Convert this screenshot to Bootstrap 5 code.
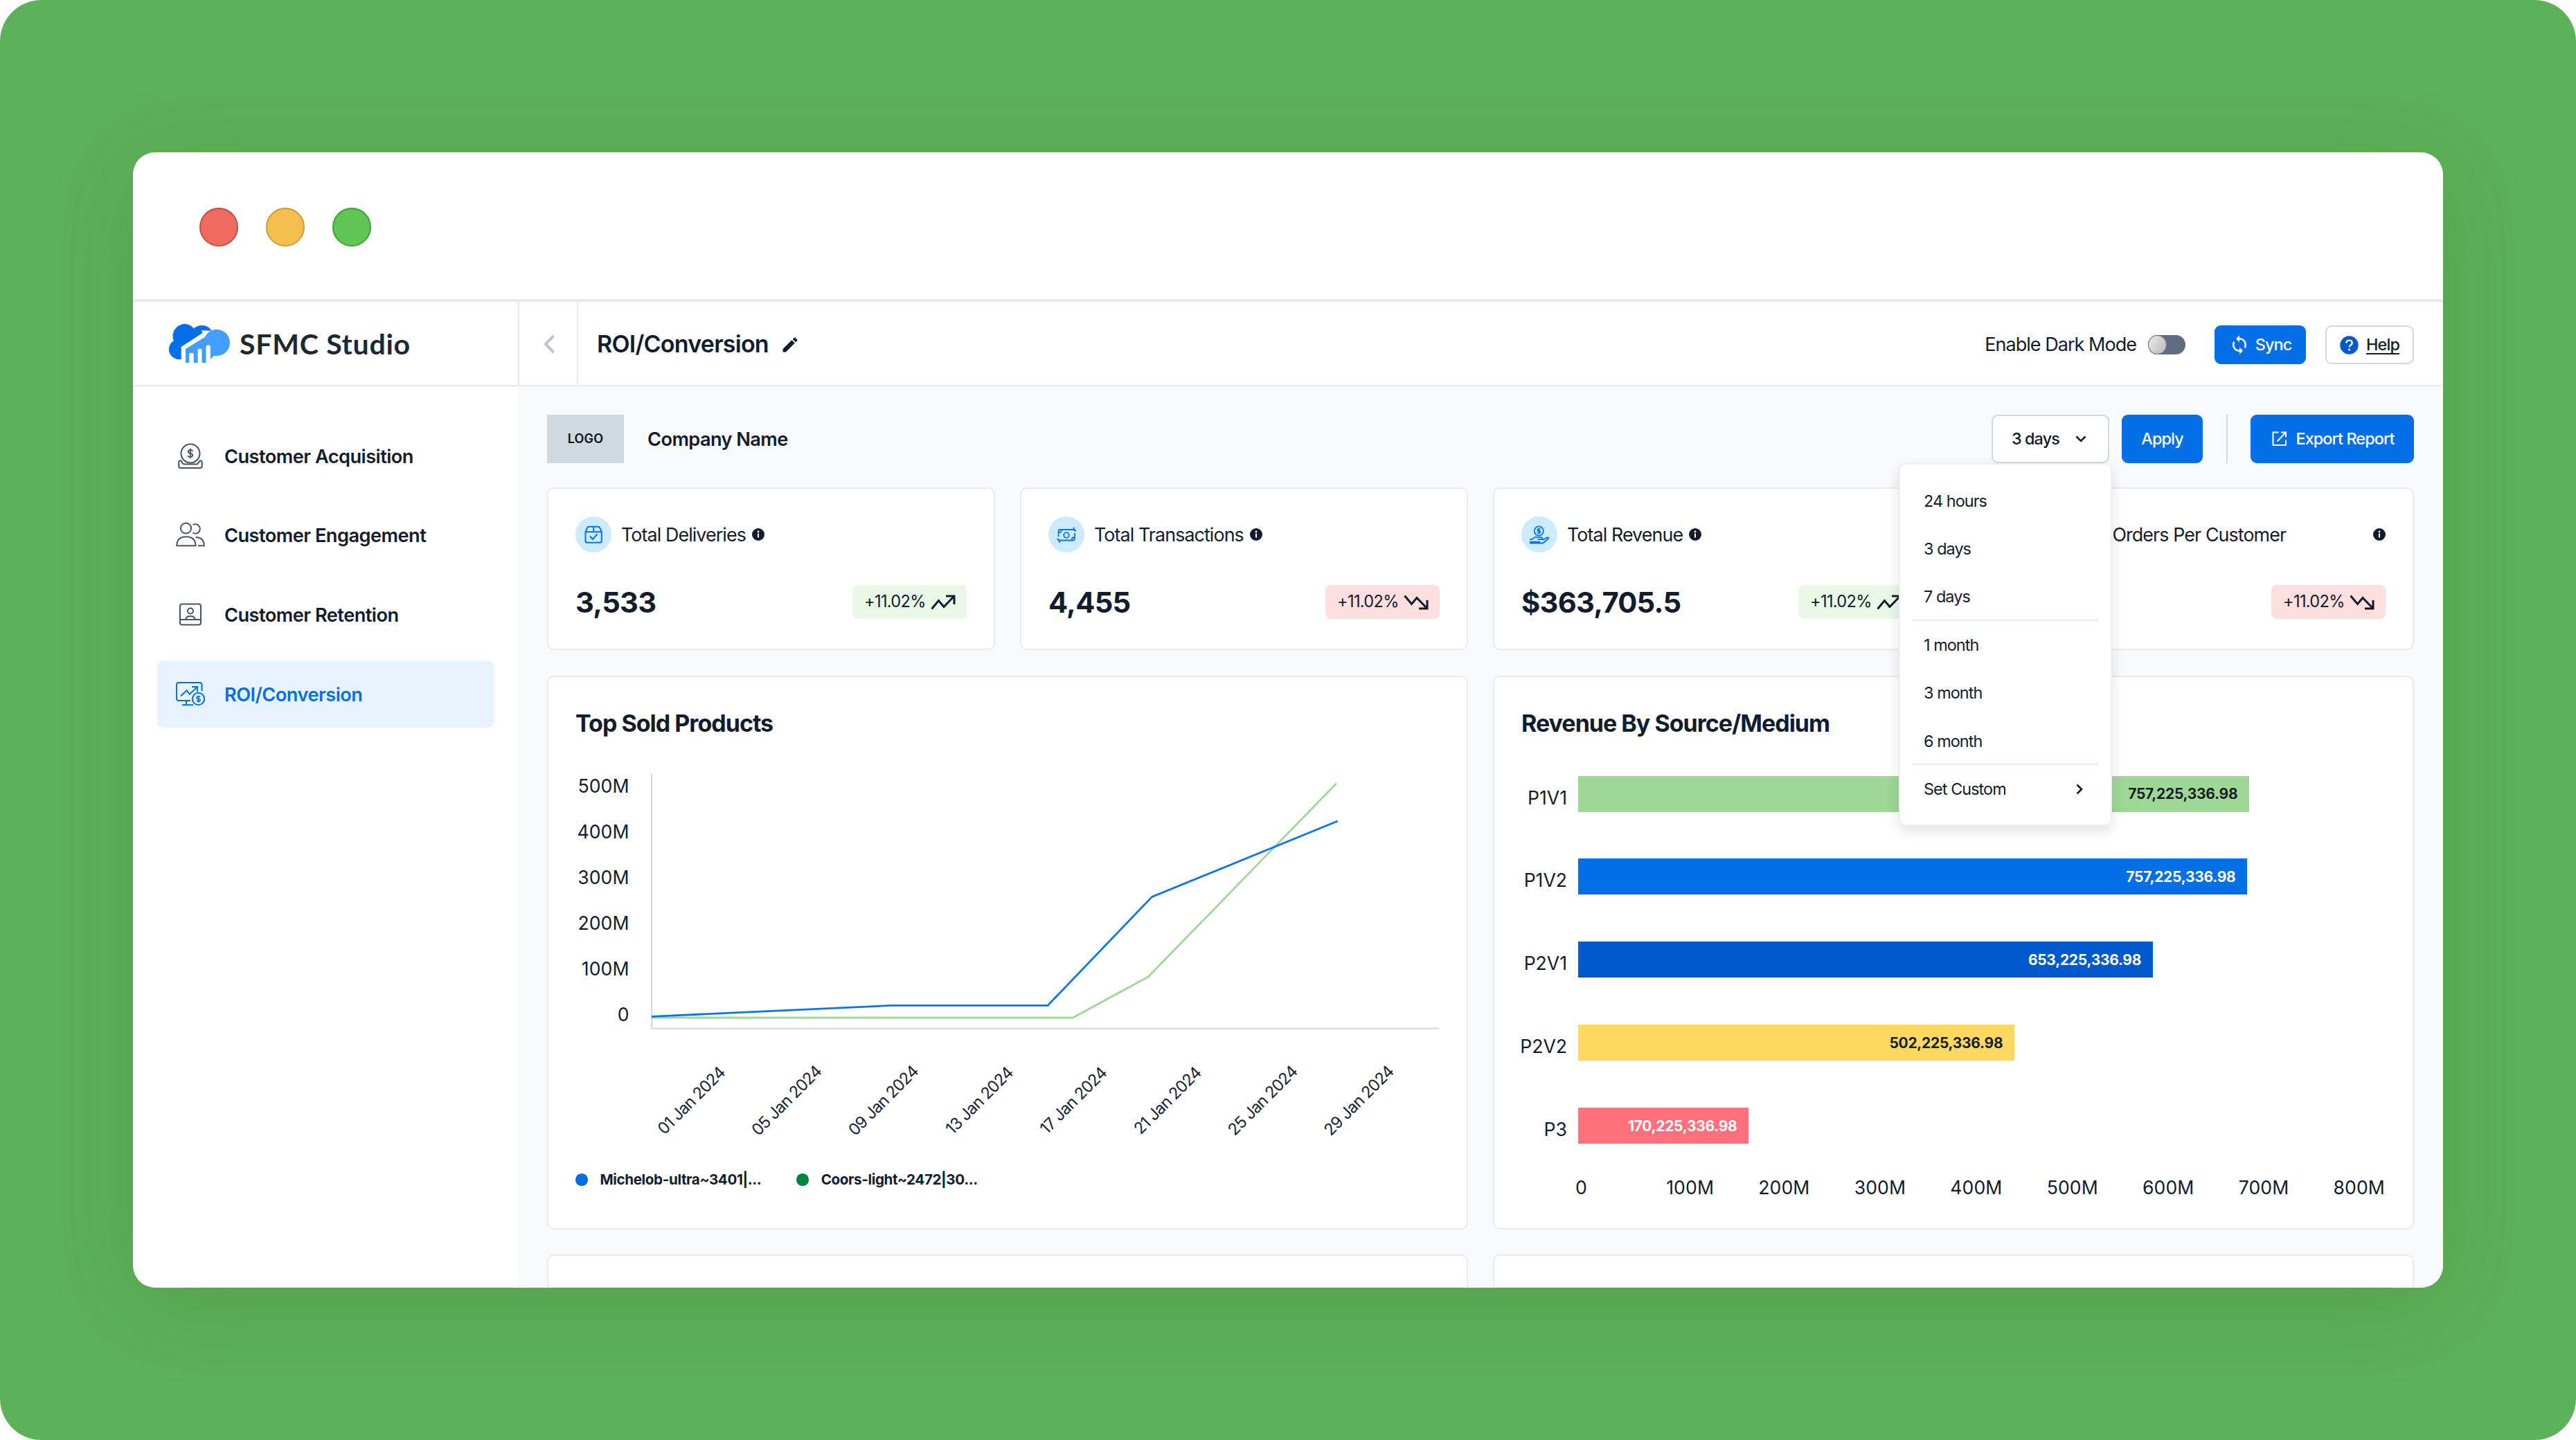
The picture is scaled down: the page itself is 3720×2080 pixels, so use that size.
<!DOCTYPE html>
<html lang="en">
<head>
<meta charset="utf-8">
<meta name="viewport" content="width=device-width, initial-scale=1">
<title>SFMC Studio – ROI/Conversion</title>
<link href="https://cdn.jsdelivr.net/npm/bootstrap@5.3.0/dist/css/bootstrap.min.css" rel="stylesheet">
<style>
  :root { --ink:#121c2d; --blue:#036fe6; --line:#e7eaed; }
  body { margin:0; background:#fff; font-family:Inter,"Liberation Sans",sans-serif; color:var(--ink); line-height:1.2; letter-spacing:-.01em; }
  svg { display:block; flex:none; }
  .stage { width:3720px; height:2080px; padding:220px 192px; border-radius:60px; background:#5db159; }
  .app-window { height:1640px; border-radius:32px; background:#fff; box-shadow:0 20px 130px rgba(40,70,20,.16); }
  .titlebar { height:216px; padding:4px 96px 0; gap:40px; border-bottom:4px solid #e6eaed; }
  .dot { width:56px; height:56px; border-radius:50%; border:2px solid; }
  .dot-r { background:#ef6a5f; border-color:#cb4a41; } .dot-y { background:#f5bf50; border-color:#ce9c35; } .dot-g { background:#61c555; border-color:#37a52f; }
  .topbar { height:122px; border-bottom:2px solid var(--line); padding-right:42px; }
  .brand { width:556px; padding-left:52px; gap:14px; }
  .brand-name { font:700 41px/1 Lato,sans-serif; color:#1e2830; letter-spacing:.018em; }
  .back { width:87px; border:solid var(--line); border-width:0 2px; padding:2px 0 0 2px; }
  .page-title { font-size:34px; font-weight:600; padding:3px 0 0 27px; gap:17px; letter-spacing:-.0225em; }
  .mode-label { font-size:27px; letter-spacing:-.036em; margin-right:17px; }
  .toggle { width:54px; height:28px; border-radius:14px; background:#606b84; margin-right:42px; }
  .knob { width:27px; height:28px; border-radius:50%; background:linear-gradient(120deg,#ececec,#b9b9b9); border:1px solid #6c7488; }
  .btn { --bs-btn-border-radius:9px; --bs-btn-font-size:23.4px; --bs-btn-font-weight:500; --bs-btn-line-height:1.2; --bs-btn-padding-x:0; --bs-btn-padding-y:0; --bs-btn-border-width:2px; letter-spacing:-.039em; color:var(--ink); border-color:#cfd9df; background:#fff; display:flex; align-items:center; justify-content:center; }
  .btn-primary { background:var(--blue); border-color:var(--blue); color:#fff; }
  .h-sync { width:132px; height:56px; gap:8px; margin-right:28px; } .h-help { width:128px; height:56px; gap:11px; }
  .help-text { text-decoration:underline; text-decoration-thickness:2px; text-underline-offset:4px; text-decoration-skip-ink:none; }
  .side { width:556px; padding:52px 35px 0; }
  .side .nav-link { height:97px; margin-bottom:17.8px; padding:0 0 0 27px; gap:28px; border-radius:9px; color:var(--ink); font-size:27.2px; font-weight:600; display:flex; align-items:center; letter-spacing:-.0195em; }
  .side .nav-link span, .company { padding-top:3px; }
  .tile-name { padding-top:2px; }
  .side .nav-link svg { color:#475269; }
  .side .nav-link.active, .side .nav-link.active svg { color:var(--blue); }
  .side .nav-link.active { background:#e7f4ff; }
  .main { background:#f8f9fb; padding:41px 42px 0; }
  .tools { height:70px; margin-bottom:35px; }
  .logo-box { width:111px; height:70px; background:#cfd9df; color:#0b0d10; font-size:18px; font-weight:600; letter-spacing:.012em; }
  .company { margin-left:34px; font-size:27.2px; font-weight:600; letter-spacing:-.0217em; }
  .sel { width:170px; height:70px; gap:23px; justify-content:flex-start; padding-left:27px; }
  .b-apply { width:117px; height:70px; margin-left:18px; } .b-export { width:236px; height:70px; gap:12px; padding-left:3px; }
  .vr-line { width:2px; height:70px; background:#d5d9dd; margin:0 33px 0 34px; }
  .dropdown-menu { width:308px; height:524px; top:70px; right:-4px; left:auto; padding:18px 0 0; border:2px solid #edeff1; border-radius:10px; box-shadow:0 8px 18px rgba(18,28,45,.12); z-index:5; }
  .dropdown-item { height:69.4px; padding:0 40px 0 34px; font-size:23.4px; letter-spacing:-.04em; color:var(--ink); display:flex; align-items:center; justify-content:space-between; }
  .sep { height:2px; background:#e6eaee; margin:-2px 17px 0; }
  .tiles, .panels { display:grid; grid-template-columns:repeat(4,1fr); gap:36px; }
  .panels { grid-template-columns:1fr 1fr; row-gap:36px; margin-top:36.5px; }
  .card { --bs-card-border-color:#e9ebee; --bs-card-border-width:2px; --bs-card-border-radius:10px; color:var(--ink); }
  .tile { height:235px; padding:39px 39px 0; }
  .tile-head { height:53px; }
  .tile-ico { width:52px; height:52px; border-radius:50%; background:#cdebff; margin-right:14px; color:#0a72ec; }
  .tile-name { font-size:26.8px; letter-spacing:-.033em; margin-right:9px; white-space:nowrap; }
  .tile-foot { height:49px; margin-top:47px; }
  .tile-num { font-size:41.7px; font-weight:650; letter-spacing:-.018em; padding-top:1px; }
  .trend { width:165px; height:48.5px; border-radius:8px; padding-left:17px; gap:7px; font-size:23.6px; letter-spacing:-.028em; }
  .up { background:#e9f8e7; } .down { background:#fedfe0; }
  .panel { height:800.5px; padding:40px 40px 40px 39px; }
  .panel h2 { font-size:34px; font-weight:650; line-height:53px; height:52px; margin:0; letter-spacing:-.029em; }
  .line-plot { margin-top:30px; letter-spacing:.004em; }
  .line-plot text { fill:var(--ink); font-size:26.6px; }
  .line-plot .dates text { font-size:23.4px; fill:#1a2436; text-anchor:middle; letter-spacing:-.038em; }
  .legend { height:27px; margin-top:31px; font-size:20.6px; font-weight:650; letter-spacing:-.018em; }
  .legend i { width:17.5px; height:17.5px; border-radius:50%; margin-right:18px; }
  .bars { margin-top:51px; display:flex; flex-direction:column; gap:67.8px; }
  .bar-row { height:52px; gap:16px; }
  .bar-key { width:66px; font-size:26.6px; letter-spacing:0; padding-top:16px; display:flex; justify-content:flex-end; white-space:nowrap; }
  .bar-fill { height:52px; padding:1px 17px 0 0; font-size:21px; font-weight:650; letter-spacing:-.014em; display:flex; align-items:center; justify-content:flex-end; color:#fff; }
  .bar-dark { color:#1a1f26; }
  .x-axis { margin:47.5px 0 0 78px; font-size:26.6px; line-height:32px; letter-spacing:.004em; }
  .x-axis span:first-child { width:67px; }
</style>
<script src="https://cdn.jsdelivr.net/npm/bootstrap@5.3.0/dist/js/bootstrap.bundle.min.js"></script>
</head>
<body>
<svg width="0" height="0" class="position-absolute">
  <symbol id="i-info" viewBox="0 0 18 18"><circle cx="9" cy="9" r="9" fill="#121c2d"/><circle cx="9" cy="5" r="1.4" fill="#fff"/><path d="M9 7.6V13.4" fill="none" stroke="#fff" stroke-width="2"/></symbol>
  <symbol id="i-up" viewBox="0 0 36 22"><path d="M1.5 20.5L11.5 8.5L19 17.5L33.5 2.5M22 2H34V14" fill="none" stroke="#121c2d" stroke-width="3"/></symbol>
  <symbol id="i-down" viewBox="0 0 36 22"><path d="M1.5 1.5L11.5 13.5L19 4.5L33.5 19.5M22 20H34V8" fill="none" stroke="#121c2d" stroke-width="3"/></symbol>
</svg>
<div class="stage">
 <div class="app-window d-flex flex-column overflow-hidden">
  <div class="titlebar d-flex align-items-center flex-shrink-0"><span class="dot dot-r"></span><span class="dot dot-y"></span><span class="dot dot-g"></span></div>

  <header class="topbar d-flex align-items-stretch flex-shrink-0">
    <div class="brand d-flex align-items-center">
      <svg width="88" height="56" viewBox="0 0 88 56"><g fill="#036fe6"><circle cx="22.7" cy="17.3" r="17.2"/><circle cx="14.5" cy="36.5" r="14.6"/><circle cx="47.5" cy="19" r="17"/><path d="M14 20H50V34L20 51H14Z"/></g><path fill="#fff" d="M17.7 56V33L48.5 13L46.7 9.3L61 9.8L70 30V56Z"/><circle cx="69" cy="27" r="19" fill="#419eff"/><path d="M24 56V36L51.3 19.3L53.7 22L61.5 9.5L72 20V45.8H65L59.8 51V56H24Z" fill="#419eff"/><path fill="#fff" d="M29.3 56V43.5q0-1.8 2-1.8h2.4q2 0 2 1.8V56zM41.7 56V37.5q0-1.8 1.9-1.8h2q1.9 0 1.9 1.8V56zM53.5 56V32.3q0-1.8 2-1.8h2.3q2 0 2 1.8V56z"/></svg>
      <span class="brand-name">SFMC Studio</span>
    </div>
    <div class="back d-flex align-items-center justify-content-center"><svg width="18" height="28" viewBox="0 0 18 28"><path d="M15.5 2L4 14L15.5 26" fill="none" stroke="#bfc3d0" stroke-width="4"/></svg></div>
    <div class="page-title d-flex align-items-center"><span>ROI/Conversion</span><svg width="28" height="28" viewBox="0 0 24 24" fill="#121c2d"><path d="M3 17.25V21h3.75L17.81 9.94l-3.75-3.75L3 17.25zM20.71 7.04c.39-.39.39-1.02 0-1.41l-2.34-2.34c-.39-.39-1.02-.39-1.41 0l-1.83 1.83 3.75 3.75 1.83-1.83z"/></svg></div>
    <div class="ms-auto d-flex align-items-center pt-1">
      <span class="mode-label">Enable Dark Mode</span>
      <span class="toggle"><span class="knob d-block"></span></span>
      <button class="btn btn-primary h-sync"><svg width="30" height="30" viewBox="0 0 24 24" fill="#fff"><path d="M12 4V1L8 5l4 4V6c3.31 0 6 2.69 6 6 0 1.01-.25 1.97-.7 2.8l1.46 1.46C19.54 15.03 20 13.57 20 12c0-4.42-3.58-8-8-8zm0 14c-3.31 0-6-2.69-6-6 0-1.01.25-1.97.7-2.8L5.24 7.74C4.46 8.97 4 10.43 4 12c0 4.42 3.58 8 8 8v3l4-4-4-4v3z"/></svg><span>Sync</span></button>
      <button class="btn h-help"><svg width="27" height="27" viewBox="0 0 27 27"><circle cx="13.5" cy="13.5" r="13.2" fill="#0059cc"/><path d="M9.3 10.6q.2-4 4.2-4t4.2 3.6q0 2-2 3.3t-2 3" fill="none" stroke="#fff" stroke-width="2.4"/><circle cx="13.6" cy="20" r="1.6" fill="#fff"/></svg><span class="help-text">Help</span></button>
    </div>
  </header>

  <div class="d-flex flex-grow-1 overflow-hidden">
    <nav class="side nav flex-column flex-nowrap flex-shrink-0">
      <a class="nav-link"><svg width="42" height="42" viewBox="0 0 42 42" fill="none" stroke="currentColor" stroke-width="2"><circle cx="21" cy="17" r="13.5"/><path d="M8 27.5H6.5Q4.2 27.5 4.2 30V35Q4.2 38 7.2 38H34.8Q37.8 38 37.8 35V30Q37.8 27.5 35.5 27.5H34M8 27.5Q9 32.5 13 32.5H29Q33 32.5 34 27.5"/><path d="M24.2 13.8Q23.8 12 21 12T17.8 14.4Q17.8 16.4 21 17T24.2 19.6Q24.2 22 21 22T17.6 20M21 9.8V24.2" stroke-width="1.8"/></svg><span>Customer Acquisition</span></a>
      <a class="nav-link"><svg width="42" height="42" viewBox="0 0 42 42" fill="none" stroke="currentColor" stroke-width="2"><circle cx="14.5" cy="11" r="7.6"/><path d="M24.6 6.2A6.7 6.7 0 1 1 24.6 17.6M1.3 36.3Q1.3 23.2 14.9 23.2T28.5 36.3ZM28.5 24Q40.6 24.5 40.8 36.3H32"/></svg><span>Customer Engagement</span></a>
      <a class="nav-link"><svg width="42" height="42" viewBox="0 0 42 42" fill="none" stroke="currentColor" stroke-width="2"><rect x="6" y="5.5" width="30" height="30" rx="3"/><path d="M6 28H36M14.5 27.5Q14.5 23 21 23T27.5 27.5"/><circle cx="21" cy="15.5" r="4"/></svg><span>Customer Retention</span></a>
      <a class="nav-link active"><svg width="42" height="42" viewBox="0 0 42 42" fill="none" stroke="currentColor" stroke-width="2"><path d="M37.5 16V7Q37.5 4 34.5 4H4Q1 4 1 7V27Q1 30 4 30H21M15 30V36M9 36.2H25M7 23.5L15.7 15.3L19.7 20.8L30.8 10.3M23 10H31V17"/><circle cx="32.5" cy="27.5" r="8.7"/><path d="M35 25.3Q34.6 24 32.5 24T30 25.6T32.5 27.5T35 29.6T32.5 31.2T30 29.6M32.5 22.4V32.8" stroke-width="1.6"/></svg><span>ROI/Conversion</span></a>
    </nav>

    <main class="main flex-grow-1">
      <div class="tools d-flex align-items-center">
        <div class="logo-box d-flex align-items-center justify-content-center">LOGO</div>
        <span class="company">Company Name</span>
        <div class="ms-auto dropdown">
          <button class="btn sel"><span>3 days</span><svg width="16" height="10" viewBox="0 0 16 10"><path d="M1.5 1.5L8 8L14.5 1.5" fill="none" stroke="#121c2d" stroke-width="2.6"/></svg></button>
          <div class="dropdown-menu show">
            <a class="dropdown-item">24 hours</a><a class="dropdown-item">3 days</a><a class="dropdown-item">7 days</a>
            <div class="sep"></div>
            <a class="dropdown-item">1 month</a><a class="dropdown-item">3 month</a><a class="dropdown-item">6 month</a>
            <div class="sep"></div>
            <a class="dropdown-item"><span>Set Custom</span><svg width="10" height="16" viewBox="0 0 10 16"><path d="M1.5 1.5L8 8L1.5 14.5" fill="none" stroke="#121c2d" stroke-width="2.6"/></svg></a>
          </div>
        </div>
        <button class="btn btn-primary b-apply">Apply</button>
        <span class="vr-line"></span>
        <button class="btn btn-primary b-export"><svg width="22" height="22" viewBox="0 0 22 22"><path d="M9.5 1.5H1.5V20H20V12.5M13 1.5H20V8.5M20 1.5L7.5 14.5" fill="none" stroke="#fff" stroke-width="2"/></svg><span>Export Report</span></button>
      </div>

      <section class="tiles">
        <div class="card tile">
          <div class="tile-head d-flex align-items-center"><span class="tile-ico"><svg width="52" height="52" viewBox="0 0 52 52" fill="none" stroke="currentColor" stroke-width="2"><path d="M14.5 22.2H37.8V35.5Q37.8 37.8 35.5 37.8H16.8Q14.5 37.8 14.5 35.5ZM14.5 22.2L17 16.5Q17.8 14.8 19.5 14.8H32.8Q34.5 14.8 35.3 16.5L37.8 22.2M26.2 14.8V22.2M21 28.5L25 33L31.5 25.5"/></svg></span><span class="tile-name">Total Deliveries</span><svg width="18" height="18"><use href="#i-info"/></svg></div>
          <div class="tile-foot d-flex align-items-center justify-content-between"><span class="tile-num">3,533</span><span class="trend up d-flex align-items-center">+11.02%<svg width="36" height="22"><use href="#i-up"/></svg></span></div>
        </div>
        <div class="card tile">
          <div class="tile-head d-flex align-items-center"><span class="tile-ico"><svg width="52" height="52" viewBox="0 0 52 52" fill="none" stroke="currentColor" stroke-width="1.8"><path d="M14.5 29V21.5Q14.5 19 17 19H39M36.5 15.8V19L39.5 21.5M38 24V32Q38 34.5 35.5 34.5H13.5M16 38V34.5L12.5 32M14.5 23.5Q19 23.5 19 19M38 30Q33.5 30 33.5 34.5"/><circle cx="26" cy="27" r="3.8"/></svg></span><span class="tile-name">Total Transactions</span><svg width="18" height="18"><use href="#i-info"/></svg></div>
          <div class="tile-foot d-flex align-items-center justify-content-between"><span class="tile-num">4,455</span><span class="trend down d-flex align-items-center">+11.02%<svg width="36" height="22"><use href="#i-down"/></svg></span></div>
        </div>
        <div class="card tile">
          <div class="tile-head d-flex align-items-center"><span class="tile-ico"><svg width="52" height="52" viewBox="0 0 52 52" fill="none" stroke="currentColor" stroke-width="1.8"><circle cx="25.3" cy="21" r="6.6"/><path d="M27.3 19Q27 18 25.3 18T23.3 19.4T25.3 21T27.3 22.6T25.3 24T23.3 22.8M25.3 16.7V25.3M12 33.2H15.5L19.5 29.8H28Q30.5 30.5 31 33.2H23.5M31 34L36.5 30.7Q39 29.7 39.5 31.5L33 37.2Q31.5 38.5 30 38.5H12M12 36.6H27"/></svg></span><span class="tile-name">Total Revenue</span><svg width="18" height="18"><use href="#i-info"/></svg></div>
          <div class="tile-foot d-flex align-items-center justify-content-between"><span class="tile-num">$363,705.5</span><span class="trend up d-flex align-items-center">+11.02%<svg width="36" height="22"><use href="#i-up"/></svg></span></div>
        </div>
        <div class="card tile">
          <div class="tile-head d-flex align-items-center"><span class="tile-ico"></span><span class="tile-name">Average Orders Per Customer</span><svg class="ms-auto" width="18" height="18"><use href="#i-info"/></svg></div>
          <div class="tile-foot d-flex align-items-center justify-content-end"><span class="trend down d-flex align-items-center">+11.02%<svg width="36" height="22"><use href="#i-down"/></svg></span></div>
        </div>
      </section>

      <section class="panels">
        <div class="card panel">
          <h2>Top Sold Products</h2>
          <svg class="line-plot" width="1249" height="560" viewBox="831 1100 1249 560">
            <path d="M941 1118V1485.5H2078" fill="none" stroke="#cfd8df" stroke-width="2"/>
            <polyline points="941,1470 1549.3,1470 1658,1411 1930,1131.5" fill="none" stroke="#9fd996" stroke-width="2.8"/>
            <polyline points="941,1468.3 1287,1452.4 1513,1452.4 1663.6,1295.4 1931.7,1186" fill="none" stroke="#0b74ec" stroke-width="2.8"/>
            <g text-anchor="end"><text x="908.5" y="1144.8">500M</text><text x="908.5" y="1211">400M</text><text x="908.5" y="1277">300M</text><text x="908.5" y="1343">200M</text><text x="908.5" y="1409">100M</text><text x="908.5" y="1475">0</text></g>
            <g class="dates"><text transform="translate(1004 1595.5) rotate(-45)">01 Jan 2024</text><text transform="translate(1141.5 1595.5) rotate(-45)">05 Jan 2024</text><text transform="translate(1281.3 1595.5) rotate(-45)">09 Jan 2024</text><text transform="translate(1420 1595.5) rotate(-45)">13 Jan 2024</text><text transform="translate(1555.7 1595.5) rotate(-45)">17 Jan 2024</text><text transform="translate(1691.7 1595.5) rotate(-45)">21 Jan 2024</text><text transform="translate(1829 1595.5) rotate(-45)">25 Jan 2024</text><text transform="translate(1968 1595.5) rotate(-45)">29 Jan 2024</text></g>
          </svg>
          <div class="legend d-flex align-items-center"><i style="background:#036fe6"></i><span>Michelob-ultra~3401|...</span><i style="background:#008539;margin-left:51px"></i><span>Coors-light~2472|30...</span></div>
        </div>
        <div class="card panel">
          <h2>Revenue By Source/Medium</h2>
          <div class="bars">
            <div class="bar-row d-flex"><span class="bar-key">P1V1</span><div class="flex-grow-1"><div class="bar-fill bar-dark" style="width:83.2%;background:#9fd797">757,225,336.98</div></div></div>
            <div class="bar-row d-flex"><span class="bar-key">P1V2</span><div class="flex-grow-1"><div class="bar-fill" style="width:82.95%;background:#036fe6">757,225,336.98</div></div></div>
            <div class="bar-row d-flex"><span class="bar-key">P2V1</span><div class="flex-grow-1"><div class="bar-fill" style="width:71.25%;background:#0059cc">653,225,336.98</div></div></div>
            <div class="bar-row d-flex"><span class="bar-key">P2V2</span><div class="flex-grow-1"><div class="bar-fill bar-dark" style="width:54.1%;background:#ffd95f">502,225,336.98</div></div></div>
            <div class="bar-row d-flex"><span class="bar-key">P3</span><div class="flex-grow-1"><div class="bar-fill" style="width:21.15%;background:#ff6f7c">170,225,336.98</div></div></div>
          </div>
          <div class="x-axis d-flex justify-content-between"><span>0</span><span>100M</span><span>200M</span><span>300M</span><span>400M</span><span>500M</span><span>600M</span><span>700M</span><span>800M</span></div>
        </div>
        <div class="card panel"></div><div class="card panel"></div>
      </section>
    </main>
  </div>
 </div>
</div>
</body>
</html>
